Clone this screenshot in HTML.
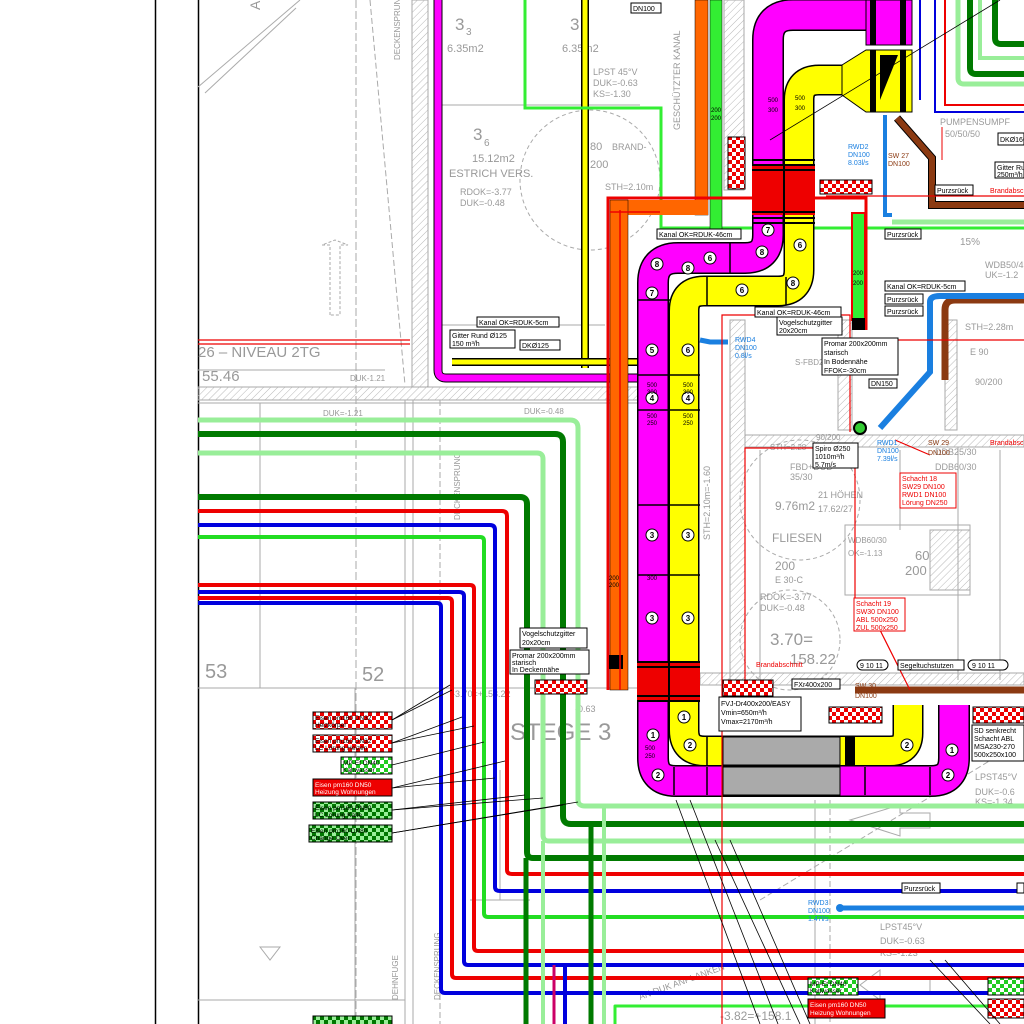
<!DOCTYPE html>
<html><head><meta charset="utf-8"><style>
html,body{margin:0;padding:0;background:#fff;width:1024px;height:1024px;overflow:hidden}
svg{display:block}
text{font-family:"Liberation Sans",sans-serif}
</style></head><body>
<svg width="1024" height="1024" viewBox="0 0 1024 1024" xmlns="http://www.w3.org/2000/svg">
<defs>
<pattern id="h" width="5" height="5" patternUnits="userSpaceOnUse" patternTransform="rotate(45)"><line x1="0" y1="0" x2="0" y2="5" stroke="#b8b8b8" stroke-width="1"/></pattern>
<pattern id="cr" width="8" height="8" patternUnits="userSpaceOnUse"><rect width="8" height="8" fill="#fff"/><rect width="4" height="4" fill="#e00"/><rect x="4" y="4" width="4" height="4" fill="#e00"/></pattern>
<pattern id="cg" width="8" height="8" patternUnits="userSpaceOnUse"><rect width="8" height="8" fill="#fff"/><rect width="4" height="4" fill="#2c2"/><rect x="4" y="4" width="4" height="4" fill="#2c2"/></pattern>
<pattern id="cd" width="8" height="8" patternUnits="userSpaceOnUse"><rect width="8" height="8" fill="#9e9"/><rect width="4" height="4" fill="#070"/><rect x="4" y="4" width="4" height="4" fill="#070"/></pattern>
</defs>

<!-- border lines -->
<line x1="155.5" y1="0" x2="155.5" y2="1024" stroke="#000" stroke-width="1.5"/>
<line x1="198.5" y1="0" x2="198.5" y2="1024" stroke="#000" stroke-width="1.5"/>

<!-- architecture gray -->
<g stroke="#aaa" stroke-width="1" fill="none">
<rect x="412" y="0" width="16" height="387" fill="url(#h)"/>
<rect x="198" y="387" width="442" height="13" fill="url(#h)"/>
<rect x="724" y="0" width="20" height="190" fill="url(#h)"/>
<rect x="730" y="320" width="15" height="360" fill="url(#h)"/>
<rect x="838" y="320" width="14" height="110" fill="url(#h)"/>
<rect x="745" y="435" width="279" height="12" fill="url(#h)"/>
<rect x="700" y="673" width="324" height="12" fill="url(#h)"/>
<rect x="945" y="320" width="12" height="110" fill="url(#h)"/>
<rect x="930" y="530" width="40" height="60" fill="url(#h)"/>
<line x1="405" y1="400" x2="405" y2="1024"/><line x1="413" y1="400" x2="413" y2="1024"/>
<line x1="440" y1="400" x2="440" y2="1024" stroke-dasharray="6 3"/>
<line x1="356" y1="0" x2="356" y2="1024" stroke-dasharray="8 3"/>
<line x1="198" y1="403" x2="640" y2="403"/>
<line x1="198" y1="688" x2="640" y2="688"/>
<line x1="260" y1="403" x2="260" y2="688"/>
<line x1="355" y1="688" x2="355" y2="1024"/>
<line x1="198" y1="87" x2="300" y2="0"/><line x1="205" y1="93" x2="296" y2="8"/>
<line x1="370" y1="0" x2="405" y2="385" stroke-dasharray="6 3"/>
<line x1="440" y1="105" x2="640" y2="105"/><line x1="525" y1="0" x2="525" y2="105"/>
<line x1="440" y1="325" x2="605" y2="325"/>
<line x1="198" y1="370" x2="385" y2="370"/>
<path d="M330 315 L330 245 L322 245 L335 240 L348 245 L340 245 L340 315 Z" stroke-dasharray="3 2"/>
<path d="M500 770 L500 900 M470 900 L530 900" />
<path d="M260 947 L270 960 L280 947 Z"/>
<circle cx="590" cy="180" r="70" stroke-dasharray="4 3"/>
<circle cx="800" cy="500" r="60" stroke-dasharray="4 3"/>
<circle cx="790" cy="640" r="50" stroke-dasharray="4 3"/>
<line x1="760" y1="450" x2="760" y2="680"/><line x1="900" y1="450" x2="900" y2="530"/>
<rect x="845" y="525" width="125" height="70"/>
<line x1="958" y1="447" x2="958" y2="680"/><line x1="1000" y1="450" x2="1000" y2="680"/>
<path d="M760 900 L1024 740" stroke-dasharray="6 3"/>
<path d="M1140 0" />
<line x1="830" y1="800" x2="830" y2="1024" stroke-dasharray="6 3"/>
<line x1="815" y1="800" x2="815" y2="1024"/>
<path d="M850 820 L900 805 L900 813 L930 813 L930 828 L900 828 L900 836 Z"/>
<path d="M860 985 L880 970 L880 978 L930 978 L930 993 L880 993 L880 1000 Z"/>
<line x1="198" y1="1000" x2="405" y2="1000"/>
</g>

<!-- gray labels -->
<g fill="#999" font-size="11">
<text x="455" y="30" font-size="17">3</text><text x="466" y="35" font-size="10">3</text>
<text x="447" y="52">6.35m2</text>
<text x="570" y="30" font-size="17">3</text><text x="562" y="52">6.35m2</text>
<text x="593" y="75" font-size="9">LPST 45°V</text><text x="593" y="86" font-size="9">DUK=-0.63</text><text x="593" y="97" font-size="9">KS=-1.30</text>
<text x="473" y="140" font-size="17">3</text><text x="484" y="146" font-size="10">6</text>
<text x="472" y="162">15.12m2</text><text x="449" y="177">ESTRICH VERS.</text>
<text x="460" y="195" font-size="9">RDOK=-3.77</text><text x="460" y="206" font-size="9">DUK=-0.48</text>
<text x="590" y="150">80</text><text x="612" y="150" font-size="9">BRAND-</text><text x="590" y="168">200</text>
<text x="605" y="190" font-size="9">STH=2.10m</text>
<text x="198" y="357" font-size="15">26 – NIVEAU 2TG</text>
<text x="202" y="381" font-size="15">55.46</text>
<text x="350" y="381" font-size="8">DUK-1.21</text>
<text x="323" y="416" font-size="8">DUK=-1.21</text>
<text x="524" y="414" font-size="8">DUK=-0.48</text>
<text x="205" y="678" font-size="20">53</text><text x="362" y="681" font-size="20">52</text>
<text x="510" y="740" font-size="24">STEGE 3</text>
<text x="452" y="697" font-size="9">-3.70=+158.22</text>
<text x="575" y="712" font-size="9">-0.63</text>
<text x="775" y="510" font-size="12">9.76m2</text>
<text x="772" y="542" font-size="12">FLIESEN</text>
<text x="818" y="512" font-size="9">17.62/27</text><text x="818" y="498" font-size="9">21 HÖHEN</text>
<text x="790" y="480" font-size="9">35/30</text><text x="790" y="470" font-size="9">FBD+DUB</text>
<text x="760" y="600" font-size="9">RDOK=-3.77</text><text x="760" y="611" font-size="9">DUK=-0.48</text>
<text x="770" y="645" font-size="17">3.70=</text><text x="790" y="664" font-size="15">158.22</text>
<text x="775" y="570" font-size="12">200</text><text x="775" y="583" font-size="9">E 30-C</text>
<text x="905" y="575" font-size="13">200</text><text x="915" y="560" font-size="13">60</text>
<text x="848" y="543" font-size="8">WDB60/30</text><text x="848" y="556" font-size="8">OK=-1.13</text>
<text x="960" y="245" font-size="10">15%</text>
<text x="985" y="268" font-size="9">WDB50/4</text><text x="985" y="278" font-size="9">UK=-1.2</text>
<text x="965" y="330" font-size="9">STH=2.28m</text>
<text x="970" y="355" font-size="9">E 90</text><text x="975" y="385" font-size="9">90/200</text>
<text x="940" y="125" font-size="9">PUMPENSUMPF</text><text x="945" y="137" font-size="9">50/50/50</text>
<text x="935" y="455" font-size="9">DDB25/30</text><text x="935" y="470" font-size="9">DDB60/30</text>
<text x="975" y="780" font-size="9">LPST45°V</text><text x="975" y="795" font-size="9">DUK=-0.6</text><text x="975" y="805" font-size="9">KS=-1.34</text>
<text x="880" y="930" font-size="9">LPST45°V</text><text x="880" y="944" font-size="9">DUK=-0.63</text><text x="880" y="956" font-size="9">KS=-1.23</text>
<text x="720" y="1020" font-size="12">-3.82=+158.1</text>
<text x="816" y="440" font-size="8">90/200</text><text x="770" y="450" font-size="8">STH=2.28</text>
<text x="795" y="365" font-size="8">S-FBD20/20</text>
<text transform="translate(460,520) rotate(-90)" font-size="8">DECKENSPRUNG</text>
<text transform="translate(440,1000) rotate(-90)" font-size="8">DECKENSPRUNG</text>
<text transform="translate(398,1000) rotate(-90)" font-size="8">DEHNFUGE</text>
<text transform="translate(400,60) rotate(-90)" font-size="8">DECKENSPRUNG</text>
<text transform="translate(680,130) rotate(-90)" font-size="9">GESCHÜTZTER KANAL</text>
<text transform="translate(710,540) rotate(-90)" font-size="9">STH=2.10m=-1.60</text>
<text transform="translate(640,1000) rotate(-20)" font-size="9">AN DUK ANPLANKEN</text>
<text transform="translate(260,10) rotate(-90)" font-size="14">AE</text>
</g>

<!-- left pipe bundle -->
<g fill="none" stroke-linejoin="round">
<path d="M198 420 H570 Q578 420 578 428 V800 Q578 806 585 806 H1024" stroke="#080" stroke-width="1"/>
<path d="M198 420 H570 Q578 420 578 428 V800 Q578 806 585 806 H1024" stroke="#9e9" stroke-width="5"/>
<path d="M198 434 H555 Q563 434 563 442 V816 Q563 824 571 824 H1024" stroke="#007a00" stroke-width="6"/>
<path d="M198 453 H537 Q543 453 543 459 V835 Q543 841 549 841 H1024" stroke="#9e9" stroke-width="5"/>
<path d="M198 497 H520 Q527 497 527 504 V852 Q527 858 533 858 H1024" stroke="#007a00" stroke-width="6"/>
<path d="M198 511 H502 Q507 511 507 516 V870 Q507 874 512 874 H1024" stroke="#e00" stroke-width="4"/>
<path d="M198 525 H490 Q495 525 495 530 V887 Q495 891 500 891 H1024" stroke="#00d" stroke-width="4"/>
<path d="M198 537 H480 Q484 537 484 541 V913 Q484 917 488 917 H1024" stroke="#2d2" stroke-width="4"/>
<path d="M198 585 H470 Q474 585 474 589 V947 Q474 951 478 951 H1024" stroke="#e00" stroke-width="4"/>
<path d="M198 592 H459 Q464 592 464 596 V961 Q464 965 468 965 H1024" stroke="#00d" stroke-width="4"/>
<path d="M198 598 H448 Q452 598 452 602 V974 Q452 978 456 978 H1024" stroke="#e00" stroke-width="4"/>
<path d="M198 603 H437 Q441 603 441 607 V989 Q441 993 445 993 H1024" stroke="#00d" stroke-width="4"/>
<line x1="526" y1="858" x2="526" y2="1024" stroke="#007a00" stroke-width="5"/>
<line x1="543" y1="841" x2="543" y2="1024" stroke="#9e9" stroke-width="4"/>
<line x1="554" y1="965" x2="554" y2="1024" stroke="#c06" stroke-width="3"/>
<line x1="565" y1="965" x2="565" y2="1024" stroke="#00d" stroke-width="4"/>
<line x1="591" y1="824" x2="591" y2="1024" stroke="#007a00" stroke-width="5"/>
<line x1="604" y1="806" x2="604" y2="1024" stroke="#9e9" stroke-width="4"/>
<path d="M615 1024 V1006 H1024" stroke="#3e3" stroke-width="3"/>
<!-- blue bottom pipe -->
<path d="M838 908 H1024" stroke="#1a7fe0" stroke-width="5"/>
</g>
<circle cx="840" cy="908" r="4" fill="#1a7fe0"/>

<!-- top-left vertical pipes -->
<path d="M438 0 V370 Q438 378 446 378 H640" fill="none" stroke="#000" stroke-width="9"/>
<path d="M438 0 V370 Q438 378 446 378 H640" fill="none" stroke="#f0f" stroke-width="7"/>
<line x1="585" y1="0" x2="585" y2="368" stroke="#000" stroke-width="8"/>
<line x1="585" y1="0" x2="585" y2="368" stroke="#ff0" stroke-width="5"/>
<path d="M452 362 H640" stroke="#000" stroke-width="8"/><path d="M452 362 H640" stroke="#ff0" stroke-width="5"/>
<path d="M525 0 V108 H661 V228 H1024" fill="none" stroke="#3e3" stroke-width="3"/>
<path d="M892 222 H1024" stroke="#9e9" stroke-width="5"/>

<!-- orange & green -->
<rect x="695" y="0" width="13" height="215" fill="#f60" stroke="#000" stroke-width=".5"/>
<rect x="710" y="0" width="12" height="230" fill="#3e3" stroke="#000" stroke-width=".5"/>
<rect x="610" y="200" width="98" height="15" fill="#f60"/>
<rect x="610" y="200" width="18" height="490" fill="#f60" stroke="#000" stroke-width=".5"/>
<!-- red frame -->
<path d="M608 690 V198 H866 V330" fill="none" stroke="#e00" stroke-width="3"/>
<rect x="852" y="213" width="13" height="107" fill="#3e3" stroke="#e00" stroke-width="2"/>
<rect x="852" y="318" width="13" height="12" fill="#000"/>
<rect x="609" y="655" width="14" height="14" fill="#000"/>
<path d="M610 212 H660 M620 210 V690" stroke="#e00" stroke-width="1.5" fill="none"/>

<!-- main ducts -->
<g fill="none" stroke-linejoin="round">
<path d="M768 160 V235 Q768 258 745 258 H678 Q653 258 653 283 V758 Q653 781 676 781 H931 Q954 781 954 758 V705" stroke="#000" stroke-width="32"/>
<path d="M768 160 V235 Q768 258 745 258 H678 Q653 258 653 283 V758 Q653 781 676 781 H931 Q954 781 954 758 V705" stroke="#f0f" stroke-width="29"/>
<path d="M799 160 V270 Q799 291 778 291 H704 Q684 291 684 311 V730 Q684 751 705 751 H890 Q908 751 908 733 V705" stroke="#000" stroke-width="31"/>
<path d="M799 160 V270 Q799 291 778 291 H704 Q684 291 684 311 V730 Q684 751 705 751 H890 Q908 751 908 733 V705" stroke="#ff0" stroke-width="28"/>
<path d="M768 160 V40 Q768 15 793 15 H866" stroke="#000" stroke-width="32"/>
<path d="M768 160 V40 Q768 15 793 15 H866" stroke="#f0f" stroke-width="29"/>
<path d="M799 165 V100 Q799 80 819 80 H842" stroke="#000" stroke-width="31"/>
<path d="M799 165 V100 Q799 80 819 80 H842" stroke="#ff0" stroke-width="28"/>
</g>
<rect x="866" y="0" width="46" height="45" fill="#f0f" stroke="#000"/>
<rect x="870" y="0" width="6" height="45" fill="#000"/><rect x="900" y="0" width="6" height="45" fill="#000"/>
<path d="M842 65 L866 50 H912 V112 H866 L842 95 Z" fill="#ff0" stroke="#000"/>
<rect x="870" y="50" width="6" height="62" fill="#000"/><rect x="900" y="50" width="6" height="62" fill="#000"/>
<path d="M880 55 L898 55 L880 100 Z" fill="#000"/>
<!-- red band top -->
<rect x="752" y="165" width="63" height="50" fill="#e00"/>
<g stroke="#000" stroke-width="2"><line x1="752" y1="160" x2="815" y2="160"/><line x1="752" y1="165" x2="815" y2="165"/><line x1="752" y1="170" x2="815" y2="170"/><line x1="752" y1="212" x2="815" y2="212"/><line x1="752" y1="218" x2="815" y2="218"/><line x1="752" y1="223" x2="815" y2="223"/><line x1="784" y1="160" x2="784" y2="223"/></g>
<!-- red band bottom -->
<rect x="637" y="662" width="63" height="38" fill="#e00"/>
<g stroke="#000" stroke-width="2"><line x1="637" y1="662" x2="700" y2="662"/><line x1="637" y1="667" x2="700" y2="667"/><line x1="637" y1="696" x2="700" y2="696"/><line x1="637" y1="701" x2="700" y2="701"/><line x1="669" y1="662" x2="669" y2="701"/></g>
<!-- gray sections -->
<rect x="723" y="737" width="117" height="28" fill="#aaa" stroke="#000"/>
<rect x="723" y="767" width="117" height="28" fill="#aaa" stroke="#000"/>
<rect x="845" y="737" width="10" height="28" fill="#000"/>
<!-- cross lines on ducts -->
<g stroke="#000" stroke-width="1.5">
<line x1="637" y1="300" x2="670" y2="300"/><line x1="637" y1="375" x2="670" y2="375"/><line x1="637" y1="410" x2="670" y2="410"/><line x1="637" y1="505" x2="670" y2="505"/><line x1="637" y1="575" x2="670" y2="575"/><line x1="670" y1="375" x2="700" y2="375"/><line x1="670" y1="410" x2="700" y2="410"/><line x1="670" y1="505" x2="700" y2="505"/><line x1="670" y1="575" x2="700" y2="575"/>
<line x1="707" y1="277" x2="707" y2="305"/><line x1="730" y1="243" x2="730" y2="273"/><line x1="786" y1="277" x2="786" y2="305"/>
<line x1="674" y1="767" x2="674" y2="795"/><line x1="707" y1="767" x2="707" y2="795"/><line x1="865" y1="767" x2="865" y2="795"/><line x1="930" y1="767" x2="930" y2="795"/><line x1="707" y1="737" x2="707" y2="765"/>
</g>
<!-- duct numbers -->
<g font-size="8" font-weight="bold" text-anchor="middle">
<g fill="#fff" stroke="#000"><circle cx="657" cy="264" r="6"/><circle cx="652" cy="293" r="6"/><circle cx="652" cy="350" r="6"/><circle cx="652" cy="398" r="6"/><circle cx="652" cy="535" r="6"/><circle cx="652" cy="618" r="6"/><circle cx="688" cy="350" r="6"/><circle cx="688" cy="398" r="6"/><circle cx="688" cy="535" r="6"/><circle cx="688" cy="618" r="6"/><circle cx="688" cy="268" r="6"/><circle cx="710" cy="258" r="6"/><circle cx="742" cy="290" r="6"/><circle cx="762" cy="252" r="6"/><circle cx="768" cy="230" r="6"/><circle cx="800" cy="245" r="6"/><circle cx="793" cy="283" r="6"/><circle cx="653" cy="735" r="6"/><circle cx="684" cy="717" r="6"/><circle cx="658" cy="775" r="6"/><circle cx="690" cy="745" r="6"/><circle cx="907" cy="745" r="6"/><circle cx="948" cy="775" r="6"/><circle cx="952" cy="750" r="6"/></g>
<g><text x="657" y="267">8</text><text x="652" y="296">7</text><text x="652" y="353">5</text><text x="652" y="401">4</text><text x="652" y="538">3</text><text x="652" y="621">3</text><text x="688" y="353">6</text><text x="688" y="401">4</text><text x="688" y="538">3</text><text x="688" y="621">3</text><text x="688" y="271">8</text><text x="710" y="261">6</text><text x="742" y="293">6</text><text x="762" y="255">8</text><text x="768" y="233">7</text><text x="800" y="248">6</text><text x="793" y="286">8</text><text x="653" y="738">1</text><text x="684" y="720">1</text><text x="658" y="778">2</text><text x="690" y="748">2</text><text x="907" y="748">2</text><text x="948" y="778">2</text><text x="952" y="753">1</text></g>
<g font-size="6" font-weight="normal"><text x="652" y="387">500</text><text x="652" y="394">300</text><text x="688" y="387">500</text><text x="688" y="394">300</text><text x="652" y="418">500</text><text x="652" y="425">250</text><text x="688" y="418">500</text><text x="688" y="425">250</text><text x="652" y="580">300</text><text x="614" y="580">200</text><text x="614" y="587">200</text><text x="858" y="275">200</text><text x="858" y="285">200</text><text x="773" y="102">500</text><text x="773" y="112">300</text><text x="800" y="100">500</text><text x="800" y="110">300</text><text x="716" y="112">200</text><text x="716" y="120">200</text><text x="650" y="750">500</text><text x="650" y="758">250</text></g>
</g>

<!-- brown duct -->
<path d="M897 118 L932 158 V205 H1024" fill="none" stroke="#000" stroke-width="8"/>
<path d="M897 118 L932 158 V205 H1024" fill="none" stroke="#8b3a12" stroke-width="6"/>
<path d="M945 380 V310 Q945 300 955 300 H1024" fill="none" stroke="#8b3a12" stroke-width="7"/>
<line x1="855" y1="690" x2="1024" y2="690" stroke="#8b3a12" stroke-width="7"/>
<!-- blue pipes -->
<path d="M885 115 V215 H892" fill="none" stroke="#1a7fe0" stroke-width="4"/>
<path d="M880 428 L930 372 V302 Q930 296 940 296 H1024" fill="none" stroke="#1a7fe0" stroke-width="6"/>
<path d="M700 340 L710 342 H728" fill="none" stroke="#1a7fe0" stroke-width="5"/>
<circle cx="860" cy="428" r="6" fill="#3c3" stroke="#000" stroke-width="2"/>

<!-- right top green nest -->
<g fill="none">
<path d="M958 0 V78 Q958 84 964 84 H1024" stroke="#9e9" stroke-width="5"/>
<path d="M970 0 V68 Q970 74 976 74 H1024" stroke="#007a00" stroke-width="6"/>
<path d="M995 0 V38 Q995 44 1001 44 H1024" stroke="#007a00" stroke-width="6"/>
<path d="M980 0 V58 H1024" stroke="#9e9" stroke-width="4"/>
<path d="M945 0 V105 H1024" stroke="#e00" stroke-width="2"/>
<path d="M935 0 V112 H1024" stroke="#00d" stroke-width="2"/>
<path d="M920 0 V100" stroke="#00d" stroke-width="2"/>
<path d="M942 127 V160" stroke="#e00" stroke-width="1"/>
</g>

<!-- red thin lines in rooms -->
<g stroke="#e00" stroke-width="1.2" fill="none">
<path d="M722 1024 V315 H850 V432"/><path d="M745 680 V448 H850"/>
<path d="M855 447 V600"/><path d="M850 340 H1024"/>
<path d="M198 340 H410 M198 344 H410"/>
<path d="M826 196 H1024"/>
<line x1="930" y1="455" x2="895" y2="440"/>
<line x1="880" y1="630" x2="910" y2="690"/>
</g>

<!-- checker labels left -->
<g stroke="#000" stroke-width="1" font-size="7">
<rect x="313" y="712" width="79" height="17" fill="url(#cr)"/>
<rect x="313" y="735" width="79" height="17" fill="url(#cr)"/>
<rect x="341" y="757" width="51" height="17" fill="url(#cg)"/>
<rect x="313" y="779" width="79" height="17" fill="#e00"/>
<rect x="313" y="802" width="79" height="17" fill="url(#cd)"/>
<rect x="309" y="825" width="83" height="17" fill="url(#cd)"/>
<rect x="535" y="680" width="52" height="14" fill="url(#cr)"/>
<rect x="723" y="680" width="50" height="16" fill="url(#cr)"/>
<rect x="829" y="707" width="53" height="16" fill="url(#cr)"/>
<rect x="973" y="707" width="51" height="16" fill="url(#cr)"/>
<rect x="728" y="137" width="17" height="52" fill="url(#cr)"/>
<rect x="820" y="180" width="52" height="14" fill="url(#cr)"/>
<rect x="808" y="978" width="50" height="17" fill="url(#cg)"/>
<rect x="808" y="999" width="77" height="19" fill="#e00"/>
<rect x="988" y="978" width="36" height="17" fill="url(#cg)"/>
<rect x="988" y="999" width="36" height="19" fill="url(#cr)"/>
<rect x="313" y="1016" width="79" height="10" fill="url(#cd)"/>
</g>
<g font-size="6.5" fill="#000" stroke="none">
<text x="315" y="720">Eisen pm160 DN32</text><text x="315" y="727">Heizkörper</text>
<text x="315" y="743">Eisen pm160 DN32</text><text x="315" y="750">LC Lörung Heizen</text>
<text x="343" y="765">MP-Et DN40</text><text x="343" y="772">Kaltwasser</text>
<text x="315" y="787" fill="#fff">Eisen pm160 DN50</text><text x="315" y="794" fill="#fff">Heizung Wohnungen</text>
<text x="315" y="810">Eisen pm160 DN80</text><text x="315" y="817">LC Lörung Kälte</text>
<text x="311" y="833">Eisen pm160 DN80</text><text x="311" y="840">Change Over</text>
<text x="810" y="986">MP-Et DN40</text><text x="810" y="993">Kaltwasser</text>
<text x="810" y="1007" fill="#fff">Eisen pm160 DN50</text><text x="810" y="1015" fill="#fff">Heizung Wohnungen</text>
</g>
<!-- leader lines -->
<g stroke="#000" stroke-width=".8">
<line x1="392" y1="720" x2="450" y2="685"/><line x1="392" y1="720" x2="452" y2="690"/>
<line x1="392" y1="743" x2="462" y2="717"/><line x1="392" y1="743" x2="474" y2="726"/>
<line x1="392" y1="765" x2="484" y2="742"/><line x1="392" y1="788" x2="505" y2="761"/><line x1="392" y1="788" x2="495" y2="778"/>
<line x1="392" y1="810" x2="525" y2="795"/><line x1="392" y1="810" x2="543" y2="798"/>
<line x1="392" y1="833" x2="563" y2="805"/><line x1="392" y1="833" x2="578" y2="802"/>
<line x1="676" y1="800" x2="760" y2="1024"/><line x1="690" y1="800" x2="778" y2="1024"/><line x1="715" y1="840" x2="800" y2="1024"/><line x1="730" y1="840" x2="810" y2="1024"/>
<line x1="930" y1="960" x2="990" y2="1024"/><line x1="945" y1="960" x2="1000" y2="1024"/>
<line x1="770" y1="140" x2="1000" y2="0"/>
</g>

<!-- boxed labels -->
<g font-size="7" fill="#000">
<g fill="#fff" stroke="#000" stroke-width="1">
<rect x="631" y="3" width="30" height="10"/>
<rect x="657" y="229" width="84" height="10"/>
<rect x="755" y="307" width="86" height="10"/>
<rect x="477" y="317" width="82" height="10"/>
<rect x="777" y="317" width="65" height="18"/>
<rect x="822" y="338" width="76" height="37"/>
<rect x="450" y="330" width="65" height="18"/>
<rect x="520" y="340" width="40" height="10"/>
<rect x="869" y="379" width="28" height="9"/>
<rect x="885" y="281" width="80" height="10"/>
<rect x="885" y="294" width="38" height="10"/>
<rect x="885" y="306" width="38" height="10"/>
<rect x="885" y="229" width="36" height="10"/>
<rect x="935" y="185" width="38" height="10"/>
<rect x="998" y="133" width="26" height="12"/>
<rect x="995" y="162" width="29" height="16"/>
<rect x="813" y="443" width="45" height="25"/>
<rect x="520" y="628" width="67" height="20"/>
<rect x="510" y="650" width="79" height="24"/>
<rect x="719" y="697" width="82" height="34"/>
<rect x="792" y="679" width="48" height="10"/>
<rect x="857" y="660" width="31" height="10" rx="5"/>
<rect x="898" y="660" width="66" height="10"/>
<rect x="968" y="660" width="40" height="10" rx="5"/>
<rect x="972" y="725" width="52" height="36"/>
<rect x="902" y="883" width="38" height="10"/>
<rect x="1017" y="883" width="7" height="10"/>
</g>
<text x="633" y="11">DN100</text>
<text x="659" y="237">Kanal OK=RDUK-46cm</text>
<text x="757" y="315">Kanal OK=RDUK-46cm</text>
<text x="479" y="325">Kanal OK=RDUK-5cm</text>
<text x="779" y="325">Vogelschutzgitter</text><text x="779" y="333">20x20cm</text>
<text x="824" y="346">Promar 200x200mm</text><text x="824" y="355">starisch</text><text x="824" y="364">In Bodennähe</text><text x="824" y="373">FFOK=-30cm</text>
<text x="452" y="338">Gitter Rund Ø125</text><text x="452" y="346">150 m³/h</text>
<text x="522" y="348">DKØ125</text>
<text x="871" y="386">DN150</text>
<text x="887" y="289">Kanal OK=RDUK-5cm</text>
<text x="887" y="302">Purzsrück</text><text x="887" y="314">Purzsrück</text><text x="887" y="237">Purzsrück</text><text x="937" y="193">Purzsrück</text>
<text x="1000" y="142">DKØ160</text>
<text x="997" y="170">Gitter Rund Ø1</text><text x="997" y="177">250m³/h</text>
<text x="815" y="451">Spiro Ø250</text><text x="815" y="459">1010m³/h</text><text x="815" y="467">5.7m/s</text>
<text x="522" y="636">Vogelschutzgitter</text><text x="522" y="645">20x20cm</text>
<text x="512" y="658">Promar 200x200mm</text><text x="512" y="665">starisch</text><text x="512" y="672">In Deckennähe</text>
<text x="721" y="706">FVJ-Dr400x200/EASY</text><text x="721" y="715">Vmin=650m³/h</text><text x="721" y="724">Vmax=2170m³/h</text>
<text x="794" y="687">FXr400x200</text>
<text x="860" y="668">9 10 11</text><text x="900" y="668">Segeltuchstutzen</text><text x="972" y="668">9 10 11</text>
<text x="974" y="733">SD senkrecht</text><text x="974" y="741">Schacht ABL</text><text x="974" y="749">MSA230-270</text><text x="974" y="757">500x250x100</text>
<text x="904" y="891">Purzsrück</text>
</g>
<!-- red boxed -->
<g font-size="7" fill="#e00">
<rect x="900" y="473" width="56" height="35" fill="#fff" stroke="#e00"/>
<text x="902" y="481">Schacht 18</text><text x="902" y="489">SW29 DN100</text><text x="902" y="497">RWD1 DN100</text><text x="902" y="505">Lörung DN250</text>
<rect x="854" y="598" width="51" height="33" fill="#fff" stroke="#e00"/>
<text x="856" y="606">Schacht 19</text><text x="856" y="614">SW30 DN100</text><text x="856" y="622">ABL 500x250</text><text x="856" y="630">ZUL 500x250</text>
<text x="756" y="667">Brandabschnitt</text><text x="990" y="445">Brandabsc</text><text x="990" y="193">Brandabsc</text>
</g>
<g font-size="7" fill="#1a7fe0">
<text x="735" y="342">RWD4</text><text x="735" y="350">DN100</text><text x="735" y="358">0.8l/s</text>
<text x="877" y="445">RWD1</text><text x="877" y="453">DN100</text><text x="877" y="461">7.39l/s</text>
<text x="848" y="149">RWD2</text><text x="848" y="157">DN100</text><text x="848" y="165">8.03l/s</text>
<text x="808" y="905">RWD3</text><text x="808" y="913">DN100</text><text x="808" y="921">1.47l/s</text>
</g>
<g font-size="7" fill="#8b3a12">
<text x="888" y="158">SW 27</text><text x="888" y="166">DN100</text>
<text x="928" y="445">SW 29</text><text x="928" y="455">DN100</text>
<text x="855" y="688">SW 30</text><text x="855" y="698">DN100</text>
</g>
</svg>
</body></html>
